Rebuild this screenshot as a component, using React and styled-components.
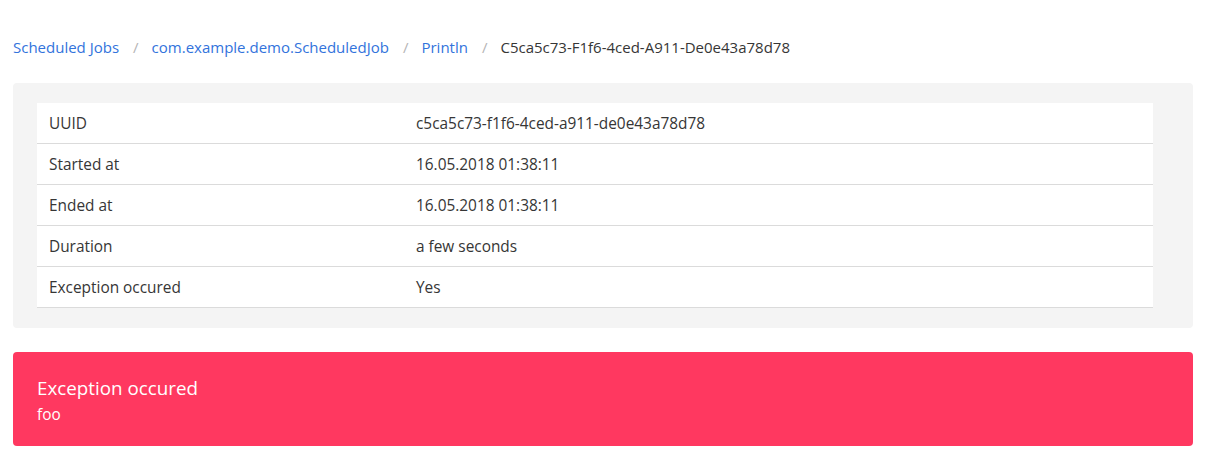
import React from 'react';
import styled, { createGlobalStyle } from "styled-components";

const GlobalStyle = createGlobalStyle`
    body {
        margin: 0;
        background: #fff;
        font-family: "Open Sans", "Noto Sans", sans-serif;
        font-size: 15.4px;
        color: #4a4a4a;
    }
`;

const Page = styled.div`
    padding: 36px 16px 0 13px;
    display: flex;
    flex-direction: column;
`;

const Crumbs = styled.nav`
    display: flex;
    align-items: center;
    height: 22px;
    margin-bottom: 25px;
    font-size: 15px;
`;

const Crumb = styled.a`
    color: ${({ active }) => (active ? "#363636" : "#3273dc")};
    text-decoration: none;
`;

const Sep = styled.span`
    color: #b5b5b5;
    padding: 0 13px 0 14px;
`;

const Box = styled.div`
    background: #f4f4f4;
    border-radius: 4px;
    padding: 20px 40px 20px 24px;
`;

const Table = styled.table`
    width: 100%;
    border-collapse: collapse;
    background: #fff;
`;

const Row = styled.tr`
    border-bottom: 1px solid #dbdbdb;
`;

const Cell = styled.td`
    height: 40px;
    padding: 0 12px;
    vertical-align: middle;
    color: #363636;
    width: ${({ first }) => (first ? "343px" : "auto")};
`;

const Notification = styled.div`
    margin-top: 24px;
    background: #ff3860;
    color: #fff;
    border-radius: 4px;
    padding: 23px 24px 20px;
    display: flex;
    flex-direction: column;
    gap: 2px;
`;

const NoteTitle = styled.div`
    font-size: 18.8px;
    line-height: 27px;
`;

const NoteBody = styled.div`
    font-size: 15.4px;
    line-height: 22px;
`;

const rows = [
    ["UUID", "c5ca5c73-f1f6-4ced-a911-de0e43a78d78"],
    ["Started at", "16.05.2018 01:38:11"],
    ["Ended at", "16.05.2018 01:38:11"],
    ["Duration", "a few seconds"],
    ["Exception occured", "Yes"],
];

const App = () => {
    return (
        <>
            <GlobalStyle />
            <Page>
                <Crumbs>
                    <Crumb href="#">Scheduled Jobs</Crumb>
                    <Sep>/</Sep>
                    <Crumb href="#">com.example.demo.ScheduledJob</Crumb>
                    <Sep>/</Sep>
                    <Crumb href="#">Println</Crumb>
                    <Sep>/</Sep>
                    <Crumb active>C5ca5c73-F1f6-4ced-A911-De0e43a78d78</Crumb>
                </Crumbs>
                <Box>
                    <Table>
                        <tbody>
                            {rows.map(([k, v]) => (
                                <Row key={k}>
                                    <Cell first>{k}</Cell>
                                    <Cell>{v}</Cell>
                                </Row>
                            ))}
                        </tbody>
                    </Table>
                </Box>
                <Notification>
                    <NoteTitle>Exception occured</NoteTitle>
                    <NoteBody>foo</NoteBody>
                </Notification>
            </Page>
        </>
    )
}

export default App
